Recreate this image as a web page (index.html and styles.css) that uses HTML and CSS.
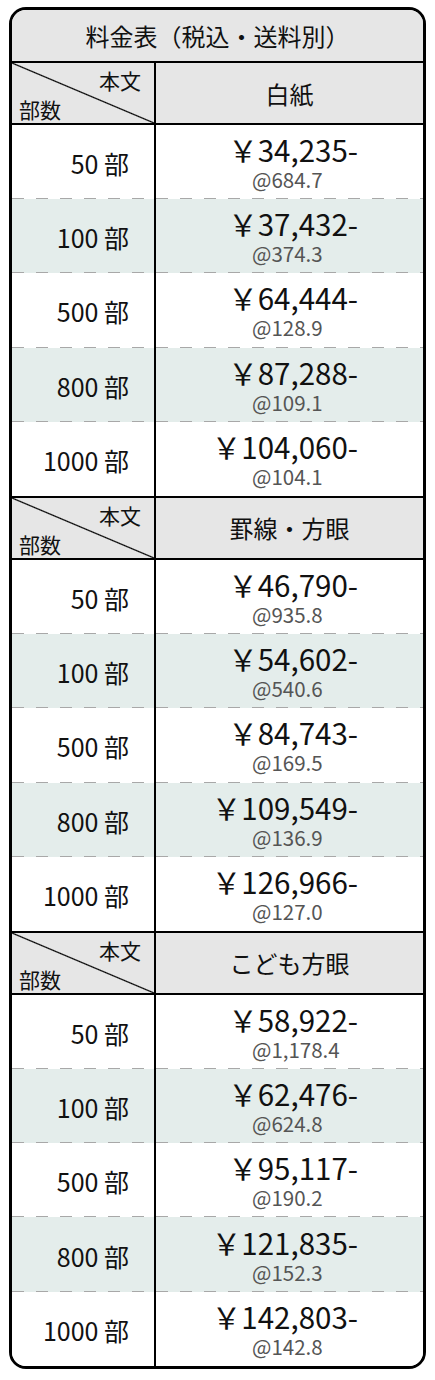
FILE: index.html
```html
<!DOCTYPE html>
<html lang="ja">
<head>
<meta charset="utf-8">
<title>料金表</title>
<link rel="stylesheet" href="styles.css">
</head>
<body>
<div class="table">
  <div class="title">料金表（税込・送料別）</div>

  <section class="section">
    <div class="head">
      <div class="corner"><span class="c-top">本文</span><span class="c-bottom">部数</span></div>
      <div class="kind">白紙</div>
    </div>
    <div class="row"><div class="qty">50 部</div><div class="cost"><div class="block"><div class="price">￥34,235-</div><div class="unit">@684.7</div></div></div></div>
    <div class="row alt"><div class="qty">100 部</div><div class="cost"><div class="block"><div class="price">￥37,432-</div><div class="unit">@374.3</div></div></div></div>
    <div class="row"><div class="qty">500 部</div><div class="cost"><div class="block"><div class="price">￥64,444-</div><div class="unit">@128.9</div></div></div></div>
    <div class="row alt"><div class="qty">800 部</div><div class="cost"><div class="block"><div class="price">￥87,288-</div><div class="unit">@109.1</div></div></div></div>
    <div class="row"><div class="qty">1000 部</div><div class="cost"><div class="block"><div class="price">￥104,060-</div><div class="unit">@104.1</div></div></div></div>
  </section>

  <section class="section">
    <div class="head">
      <div class="corner"><span class="c-top">本文</span><span class="c-bottom">部数</span></div>
      <div class="kind">罫線・方眼</div>
    </div>
    <div class="row"><div class="qty">50 部</div><div class="cost"><div class="block"><div class="price">￥46,790-</div><div class="unit">@935.8</div></div></div></div>
    <div class="row alt"><div class="qty">100 部</div><div class="cost"><div class="block"><div class="price">￥54,602-</div><div class="unit">@540.6</div></div></div></div>
    <div class="row"><div class="qty">500 部</div><div class="cost"><div class="block"><div class="price">￥84,743-</div><div class="unit">@169.5</div></div></div></div>
    <div class="row alt"><div class="qty">800 部</div><div class="cost"><div class="block"><div class="price">￥109,549-</div><div class="unit">@136.9</div></div></div></div>
    <div class="row"><div class="qty">1000 部</div><div class="cost"><div class="block"><div class="price">￥126,966-</div><div class="unit">@127.0</div></div></div></div>
  </section>

  <section class="section">
    <div class="head">
      <div class="corner"><span class="c-top">本文</span><span class="c-bottom">部数</span></div>
      <div class="kind">こども方眼</div>
    </div>
    <div class="row"><div class="qty">50 部</div><div class="cost"><div class="block"><div class="price">￥58,922-</div><div class="unit">@1,178.4</div></div></div></div>
    <div class="row alt"><div class="qty">100 部</div><div class="cost"><div class="block"><div class="price">￥62,476-</div><div class="unit">@624.8</div></div></div></div>
    <div class="row"><div class="qty">500 部</div><div class="cost"><div class="block"><div class="price">￥95,117-</div><div class="unit">@190.2</div></div></div></div>
    <div class="row alt"><div class="qty">800 部</div><div class="cost"><div class="block"><div class="price">￥121,835-</div><div class="unit">@152.3</div></div></div></div>
    <div class="row"><div class="qty">1000 部</div><div class="cost"><div class="block"><div class="price">￥142,803-</div><div class="unit">@142.8</div></div></div></div>
  </section>
</div>
</body>
</html>
```

FILE: styles.css
```css
* { box-sizing: border-box; }
html, body { margin: 0; padding: 0; background: #fff; }
body {
  font-family: "Noto Sans CJK JP", "Noto Sans", sans-serif;
  color: #111;
}
.table {
  width: 417px;
  margin: 7px 9px;
  border: 3px solid #000;
  border-radius: 17px;
  overflow: hidden;
}
.title {
  height: 51px;
  background: #e6e6e6;
  font-size: 24px;
  line-height: 51px;
  text-align: center;
}
.section { border-top: 2px solid #000; }
.head {
  display: grid;
  grid-template-columns: 144px 1fr;
  height: 62px;
  background: #e6e6e6;
  border-bottom: 2px solid #000;
}
.corner {
  border-right: 2px solid #000;
  display: flex;
  flex-direction: column;
  justify-content: space-between;
  padding: 3px 13px 0 7px;
  font-size: 21px;
  line-height: 28px;
  background: linear-gradient(to top right, transparent calc(50% - 1.2px), #000 50%, transparent calc(50% + 1.2px));
}
.c-top { align-self: flex-end; }
.c-bottom { align-self: flex-start; }
.kind {
  display: flex;
  align-items: center;
  justify-content: center;
  font-size: 24px;
}
.row {
  display: grid;
  grid-template-columns: 144px 1fr;
  height: 74.2px;
  background: #fff;
  background-image: repeating-linear-gradient(to right, #a8a8a8 0 12px, transparent 12px 24px);
  background-size: 100% 1px;
  background-repeat: no-repeat;
  background-position: 0 100%;
}
.row:last-child { background-image: none; }
.row.alt { background-color: #e4edeb; }
.qty {
  border-right: 2px solid #000;
  display: flex;
  align-items: center;
  justify-content: flex-end;
  padding: 2px 25px 0 0;
  font-size: 25px;
}
.cost {
  display: flex;
  align-items: center;
  justify-content: flex-start;
  padding-left: 50px;
}
.block { width: 152px; }
.price {
  text-align: right;
  font-size: 29.5px;
  line-height: 34px;
  white-space: nowrap;
}
.unit {
  padding-left: 46px;
  font-size: 20.5px;
  line-height: 26px;
  color: #555;
  white-space: nowrap;
}
```
